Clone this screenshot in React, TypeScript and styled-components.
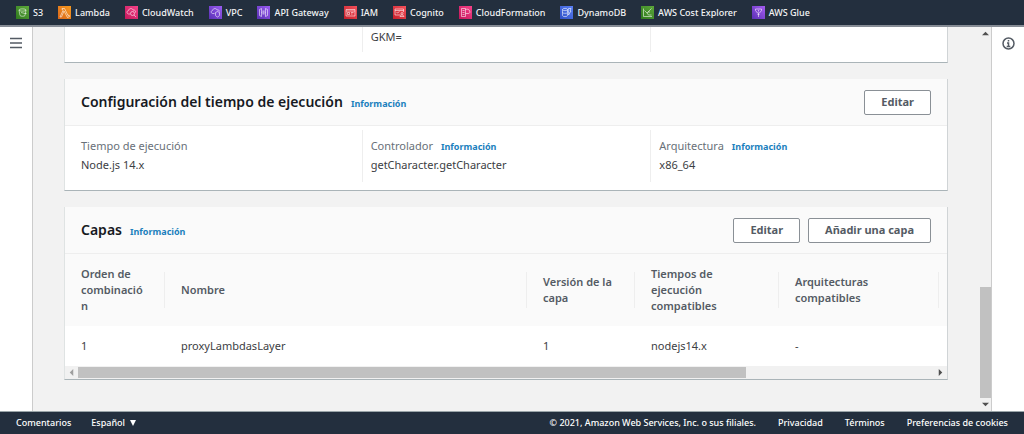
import React from "react";
import styled, { createGlobalStyle, css } from "styled-components";

const c = {
  navy: "#232f3e",
  page: "#f2f2f2",
  head: "#fafafa",
  line: "#eeeeee",
  text: "#3c4043",
  muted: "#687078",
  link: "#1a80bd",
  heading: "#16191f",
  button: "#545b64",
};

const Global = createGlobalStyle`
  *, *::before, *::after { box-sizing: border-box; }
  body {
    margin: 0;
    background: #fff;
    color: ${c.text};
    font: 400 11px/16px "Noto Sans", "Open Sans", sans-serif;
  }
  a { text-decoration: none; color: inherit; }
`;

const Page = styled.div`
  display: flex;
  flex-direction: column;
  height: 100vh;
`;

/* ---------- favourites bar ---------- */

const NavBar = styled.nav`
  flex: none;
  display: flex;
  align-items: center;
  gap: 15px;
  height: 27px;
  padding: 0 16px;
  background: ${c.navy};
  border-bottom: 2px solid #868c95;
  overflow: hidden;
`;

const NavLink = styled.a`
  display: flex;
  align-items: center;
  gap: 4px;
  color: #f4f5f6;
  font-size: 9px;
  font-weight: 500;
  white-space: nowrap;
`;

const Tile = styled.svg`
  flex: none;
  width: 13px;
  height: 13px;
`;

type Service = { name: string; from: string; to: string; glyph: React.ReactNode };

const services: Service[] = [
  {
    name: "S3",
    from: "#2f7a1e",
    to: "#5da83a",
    glyph: (
      <>
        <path d="M6 8c0-3 14-3 14 0l-2 11c-1 2-9 2-10 0z" />
        <path d="M6 8c0 3 14 3 14 0M10 13l4 1 4 1h3" />
      </>
    ),
  },
  {
    name: "Lambda",
    from: "#d8661a",
    to: "#f79a20",
    glyph: <path d="M8 5h5l7 14 2-1 1 3-4 2-7-13-5 12H4l6-13-1-2H8z" />,
  },
  {
    name: "CloudWatch",
    from: "#c3175a",
    to: "#f6428a",
    glyph: (
      <>
        <path d="M10 16H7c-4-1-4-6 0-7 1-5 8-5 9-1 4-1 6 3 5 5" />
        <circle cx="15" cy="15" r="4" />
        <path d="M18 18l4 4" />
      </>
    ),
  },
  {
    name: "VPC",
    from: "#5a30b5",
    to: "#9a5cf2",
    glyph: (
      <>
        <path d="M11 15H7c-4-1-3-6 0-6 1-5 8-5 9-1 3-1 5 1 5 3" />
        <path d="M13 13l4-2 4 2v5c0 2-2 3-4 4-2-1-4-2-4-4z" />
      </>
    ),
  },
  {
    name: "API Gateway",
    from: "#5a30b5",
    to: "#9a5cf2",
    glyph: (
      <>
        <path d="M5 7l4-2v16l-4-2zM21 7l-4-2v16l4-2z" />
        <path d="M12 9v8M14 9v8M9 13h1M16 13h1" />
      </>
    ),
  },
  {
    name: "IAM",
    from: "#c5202b",
    to: "#f5505a",
    glyph: (
      <>
        <path d="M4 7h18v13H4zM4 10h18" />
        <path d="M7 13h4v4H7zM14 13h5M14 16h3" />
      </>
    ),
  },
  {
    name: "Cognito",
    from: "#c5202b",
    to: "#f5505a",
    glyph: (
      <>
        <path d="M15 18H4V6h17v6M4 9h17M7 12l2 2 4-3" />
        <circle cx="18" cy="15" r="2" />
        <path d="M14 21c1-4 7-4 8 0z" />
      </>
    ),
  },
  {
    name: "CloudFormation",
    from: "#c3175a",
    to: "#f6428a",
    glyph: (
      <>
        <path d="M5 5h8v16H5zM7 9h4M7 13h4M7 17h4" />
        <path d="M13 7c4-2 8 0 8 3 2 2 0 5-2 5h-6" />
      </>
    ),
  },
  {
    name: "DynamoDB",
    from: "#2f4fc4",
    to: "#5a80f5",
    glyph: (
      <>
        <path d="M5 7c0-3 10-3 10 0v12c0 3-10 3-10 0z" />
        <path d="M5 7c0 3 10 3 10 0M5 13c0 2 8 2 9 1M17 5h5l-2 5h2l-5 8 1-6h-2z" />
      </>
    ),
  },
  {
    name: "AWS Cost Explorer",
    from: "#2f7a1e",
    to: "#5da83a",
    glyph: <path d="M5 5v16h17M7 9l5 5 4-4 5-5M12 14l3 4h6M16 10v4" />,
  },
  {
    name: "AWS Glue",
    from: "#5a30b5",
    to: "#a55cf2",
    glyph: (
      <>
        <path d="M7 6h12v3l-4 5h-4L7 9z" />
        <path d="M13 8v3M13 14v8M11 17h4" />
      </>
    ),
  },
];

function ServiceTile({ s }: { s: Service }) {
  const id = "g-" + s.name.replace(/\s/g, "");
  return (
    <Tile viewBox="0 0 26 26" aria-hidden="true">
      <defs>
        <linearGradient id={id} x1="0" y1="1" x2="1" y2="0">
          <stop offset="0" stopColor={s.from} />
          <stop offset="1" stopColor={s.to} />
        </linearGradient>
      </defs>
      <rect width="26" height="26" fill={`url(#${id})`} />
      <g fill="none" stroke="#fff" strokeOpacity="0.8" strokeWidth="1.4">
        {s.glyph}
      </g>
    </Tile>
  );
}

/* ---------- shell ---------- */

const Shell = styled.div`
  flex: 1;
  min-height: 0;
  display: flex;
`;

const Rail = styled.aside`
  flex: none;
  width: 32px;
  padding-top: 10px;
  display: flex;
  justify-content: center;
  align-items: flex-start;
  background: #fff;
`;

const RailButton = styled.button`
  display: flex;
  padding: 0;
  border: 0;
  background: none;
  color: ${c.button};
`;

const Content = styled.main`
  flex: 1;
  min-width: 0;
  display: flex;
  background: ${c.page};
  border: solid #cccccc;
  border-width: 0 1px;
`;

const Cards = styled.div`
  flex: 1;
  min-width: 0;
  display: flex;
  flex-direction: column;
  gap: 16px;
  padding: 0 32px 0 31px;
  overflow: hidden;
`;

const Card = styled.section`
  flex: none;
  background: #fff;
  border-left: 1px solid #dfe3e3;
  border-right: 1px solid #d0d4d6;
  border-bottom: 1px solid #aab4b8;
`;

const CardHeader = styled.header`
  display: flex;
  align-items: center;
  gap: 8px;
  height: 47px;
  padding: 0 16px;
  background: ${c.head};
  border-bottom: 1px solid ${c.line};
`;

const Title = styled.h2`
  margin: 0;
  color: ${c.heading};
  font-size: 14px;
  line-height: 20px;
  font-weight: 600;
`;

const InfoLink = styled.a`
  color: ${c.link};
  font-size: 9px;
  line-height: 12px;
  font-weight: 700;
`;

const TitleGroup = styled.div`
  flex: 1;
  display: flex;
  align-items: baseline;
  gap: 8px;
`;

const Button = styled.button`
  height: 25px;
  padding: 0 16px;
  border: 1px solid #8a9096;
  border-radius: 2px;
  background: #fff;
  color: ${c.button};
  font: 700 11px/16px "Noto Sans", "Open Sans", sans-serif;
`;

const Fields = styled.dl<{ $clipped?: boolean }>`
  display: grid;
  grid-template-columns: repeat(3, 1fr);
  margin: 0;
  padding: ${(p) => (p.$clipped ? "0 8px 10px" : "4px 8px 8px")};
`;

const Field = styled.div<{ $clipped?: boolean }>`
  min-height: ${(p) => (p.$clipped ? 25 : 52)}px;
  padding: ${(p) => (p.$clipped ? "2px 8px 0" : "8px 8px 0")};
  & + & {
    border-left: 1px solid ${c.line};
  }
`;

const Label = styled.dt`
  display: flex;
  align-items: baseline;
  gap: 8px;
  color: ${c.muted};
`;

const Value = styled.dd`
  margin: 3px 0 0;
`;

const ClippedValue = styled.dd`
  margin: 0;
`;

/* ---------- layers table ---------- */

const Table = styled.table`
  width: 100%;
  table-layout: fixed;
  border-collapse: collapse;
`;

const Col = styled.col<{ $w?: number }>`
  ${(p) => p.$w && css`width: ${p.$w}px;`}
`;

const Th = styled.th`
  height: 72px;
  padding: 0;
  background: ${c.head};
  color: ${c.button};
  font-weight: 600;
  text-align: left;
`;

const HeadCell = styled.div`
  display: flex;
  align-items: center;
  height: 36px;
  padding: 0 20px 0 16px;
  border-right: 1px solid ${c.line};
  & > span {
    min-width: 0;
    overflow-wrap: anywhere;
  }
`;

const Td = styled.td`
  height: 40px;
  padding: 0 16px;
`;

/* ---------- scroll bars ---------- */

const HBar = styled.div`
  display: grid;
  grid-template-columns: 13px 1fr 13px;
  height: 13px;
  background: #f1f1f1;
  color: #505050;
`;

const VBar = styled.div`
  flex: none;
  display: grid;
  grid-template-rows: 13px 1fr 13px;
  width: 11px;
  background: #f1f1f1;
  color: #505050;
`;

const Arrow = styled.svg<{ $dim?: boolean }>`
  display: block;
  place-self: center;
  width: 7px;
  height: 7px;
  fill: currentColor;
  opacity: ${(p) => (p.$dim ? 0.5 : 1)};
`;

const HThumb = styled.div`
  width: 78%;
  height: 11px;
  align-self: center;
  background: #c1c1c1;
`;

const VThumb = styled.div`
  height: 31%;
  align-self: end;
  background: #c1c1c1;
`;

/* ---------- footer ---------- */

const Footer = styled.footer`
  flex: none;
  display: flex;
  align-items: center;
  height: 23px;
  padding: 0 16px;
  background: ${c.navy};
  border-top: 1px solid #9aa5a9;
  color: #fff;
  font-size: 9px;
  font-weight: 500;
  white-space: nowrap;
`;

const FooterGroup = styled.div<{ $end?: boolean }>`
  display: flex;
  align-items: center;
  gap: ${(p) => (p.$end ? 22 : 20)}px;
  ${(p) => p.$end && css`margin-left: auto;`}
`;

const Language = styled.button`
  display: flex;
  align-items: center;
  gap: 5px;
  padding: 0;
  border: 0;
  background: none;
  color: inherit;
  font: inherit;
`;

const headers = [
  "Orden de combinación",
  "Nombre",
  "Versión de la capa",
  "Tiempos de ejecución compatibles",
  "Arquitecturas compatibles",
];

export default function App() {
  return (
    <Page>
      <Global />
      <NavBar>
        {services.map((s) => (
          <NavLink key={s.name} href="#">
            <ServiceTile s={s} />
            {s.name}
          </NavLink>
        ))}
      </NavBar>

      <Shell>
        <Rail>
          <RailButton aria-label="Menú">
            <svg width="12" height="12" viewBox="0 0 12 12" stroke="currentColor" strokeWidth="1.4">
              <path d="M0 1.5h12M0 6h12M0 10.5h12" />
            </svg>
          </RailButton>
        </Rail>

        <Content>
          <Cards>
            <Card>
              <Fields $clipped>
                <Field $clipped />
                <Field $clipped>
                  <ClippedValue>GKM=</ClippedValue>
                </Field>
                <Field $clipped />
              </Fields>
            </Card>

            <Card>
              <CardHeader>
                <TitleGroup>
                  <Title>Configuración del tiempo de ejecución</Title>
                  <InfoLink href="#">Información</InfoLink>
                </TitleGroup>
                <Button>Editar</Button>
              </CardHeader>
              <Fields>
                <Field>
                  <Label>Tiempo de ejecución</Label>
                  <Value>Node.js 14.x</Value>
                </Field>
                <Field>
                  <Label>
                    Controlador <InfoLink href="#">Información</InfoLink>
                  </Label>
                  <Value>getCharacter.getCharacter</Value>
                </Field>
                <Field>
                  <Label>
                    Arquitectura <InfoLink href="#">Información</InfoLink>
                  </Label>
                  <Value>x86_64</Value>
                </Field>
              </Fields>
            </Card>

            <Card>
              <CardHeader>
                <TitleGroup>
                  <Title>Capas</Title>
                  <InfoLink href="#">Información</InfoLink>
                </TitleGroup>
                <Button>Editar</Button>
                <Button>Añadir una capa</Button>
              </CardHeader>
              <Table>
                <colgroup>
                  <Col $w={100} />
                  <Col />
                  <Col $w={108} />
                  <Col $w={144} />
                  <Col $w={160} />
                  <Col $w={8} />
                </colgroup>
                <thead>
                  <tr>
                    {headers.map((h) => (
                      <Th key={h} scope="col">
                        <HeadCell>
                          <span>{h}</span>
                        </HeadCell>
                      </Th>
                    ))}
                    <Th as="td" />
                  </tr>
                </thead>
                <tbody>
                  <tr>
                    <Td>1</Td>
                    <Td>proxyLambdasLayer</Td>
                    <Td>1</Td>
                    <Td>nodejs14.x</Td>
                    <Td>-</Td>
                  </tr>
                </tbody>
              </Table>
              <HBar>
                <Arrow $dim viewBox="0 0 8 8">
                  <path d="M6 0v8L2 4z" />
                </Arrow>
                <HThumb />
                <Arrow viewBox="0 0 8 8">
                  <path d="M2 0v8l4-4z" />
                </Arrow>
              </HBar>
            </Card>
          </Cards>

          <VBar>
            <Arrow viewBox="0 0 8 8">
              <path d="M0 6h8L4 2z" />
            </Arrow>
            <VThumb />
            <Arrow viewBox="0 0 8 8">
              <path d="M0 2h8L4 6z" />
            </Arrow>
          </VBar>
        </Content>

        <Rail>
          <RailButton aria-label="Información">
            <svg width="13" height="13" viewBox="0 0 13 13" fill="none" stroke="currentColor" strokeWidth="1.5">
              <circle cx="6.5" cy="6.5" r="5.5" />
              <path d="M6.5 3v1.5M5 6h1.5v3.3M4.7 9.5h3.6" />
            </svg>
          </RailButton>
        </Rail>
      </Shell>

      <Footer>
        <FooterGroup>
          <a href="#">Comentarios</a>
          <Language>
            Español
            <svg width="6" height="6" viewBox="0 0 6 6" fill="currentColor">
              <path d="M0 0h6L3 6z" />
            </svg>
          </Language>
        </FooterGroup>
        <FooterGroup $end>
          <span>© 2021, Amazon Web Services, Inc. o sus filiales.</span>
          <a href="#">Privacidad</a>
          <a href="#">Términos</a>
          <a href="#">Preferencias de cookies</a>
        </FooterGroup>
      </Footer>
    </Page>
  );
}
